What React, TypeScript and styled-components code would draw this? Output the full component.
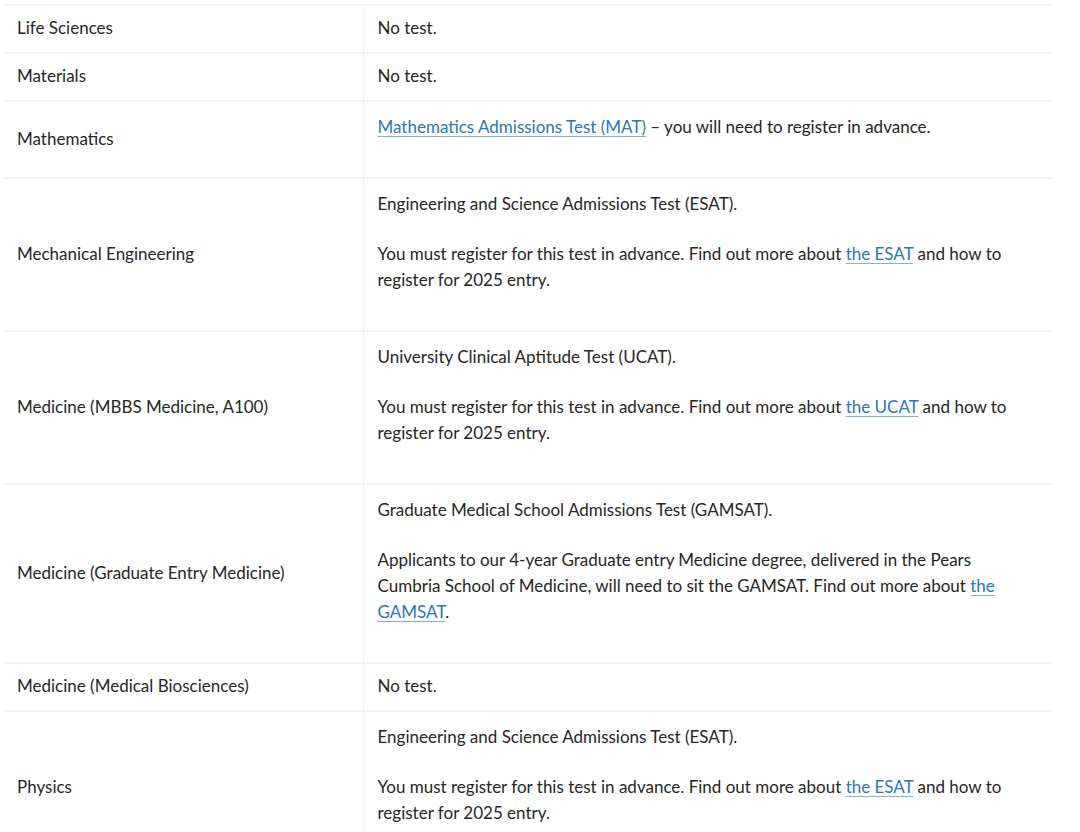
import styled, { createGlobalStyle } from 'styled-components';

const GlobalStyle = createGlobalStyle`
  body {
    margin: 0;
    background: #ffffff;
    font-family: Lato, 'Liberation Sans', sans-serif;
    color: #262626;
  }
`;

const Page = styled.div`
  padding: 4px 0 0 3px;
`;

const Table = styled.table`
  width: 1050px;
  border-collapse: collapse;
  font-size: 17px;
  line-height: 26px;
`;

const Row = styled.tr`
  border-top: 2px solid #f2f3f3;
`;

const Subject = styled.td`
  width: 360px;
  box-sizing: border-box;
  padding: 9px 14px 11px;
  vertical-align: middle;
  border-right: 1px solid #f0f1f1;
`;

const Detail = styled.td`
  padding: 9px 33px 11px 14px;
  vertical-align: top;
`;

const Para = styled.p`
  margin: 0 0 24px;

  &:first-child {
    margin-top: 3px;
  }

  &:last-child {
    margin-bottom: 26px;
  }
`;

const TestLink = styled.a`
  color: #2b77b5;
  text-decoration: underline;
  text-decoration-color: #7fb0d6;
  text-underline-offset: 3px;
`;

type Entry = {
  subject: string;
  detail: React.ReactNode;
};

const registerText = (test: string) => (
  <Para>
    You must register for this test in advance. Find out more about{' '}
    <TestLink href="#">{test}</TestLink> and how to register for 2025 entry.
  </Para>
);

const entries: Entry[] = [
  { subject: 'Life Sciences', detail: 'No test.' },
  { subject: 'Materials', detail: 'No test.' },
  {
    subject: 'Mathematics',
    detail: (
      <Para>
        <TestLink href="#">Mathematics Admissions Test (MAT)</TestLink> – you will need to register
        in advance.
      </Para>
    ),
  },
  {
    subject: 'Mechanical Engineering',
    detail: (
      <>
        <Para>Engineering and Science Admissions Test (ESAT).</Para>
        {registerText('the ESAT')}
      </>
    ),
  },
  {
    subject: 'Medicine (MBBS Medicine, A100)',
    detail: (
      <>
        <Para>University Clinical Aptitude Test (UCAT).</Para>
        {registerText('the UCAT')}
      </>
    ),
  },
  {
    subject: 'Medicine (Graduate Entry Medicine)',
    detail: (
      <>
        <Para>Graduate Medical School Admissions Test (GAMSAT).</Para>
        <Para>
          Applicants to our 4-year Graduate entry Medicine degree, delivered in the Pears Cumbria
          School of Medicine, will need to sit the GAMSAT. Find out more about{' '}
          <TestLink href="#">the GAMSAT</TestLink>.
        </Para>
      </>
    ),
  },
  { subject: 'Medicine (Medical Biosciences)', detail: 'No test.' },
  {
    subject: 'Physics',
    detail: (
      <>
        <Para>Engineering and Science Admissions Test (ESAT).</Para>
        {registerText('the ESAT')}
      </>
    ),
  },
];

export default function App() {
  return (
    <Page>
      <GlobalStyle />
      <Table>
        <tbody>
          {entries.map((e) => (
            <Row key={e.subject}>
              <Subject>{e.subject}</Subject>
              <Detail>{e.detail}</Detail>
            </Row>
          ))}
        </tbody>
      </Table>
    </Page>
  );
}
